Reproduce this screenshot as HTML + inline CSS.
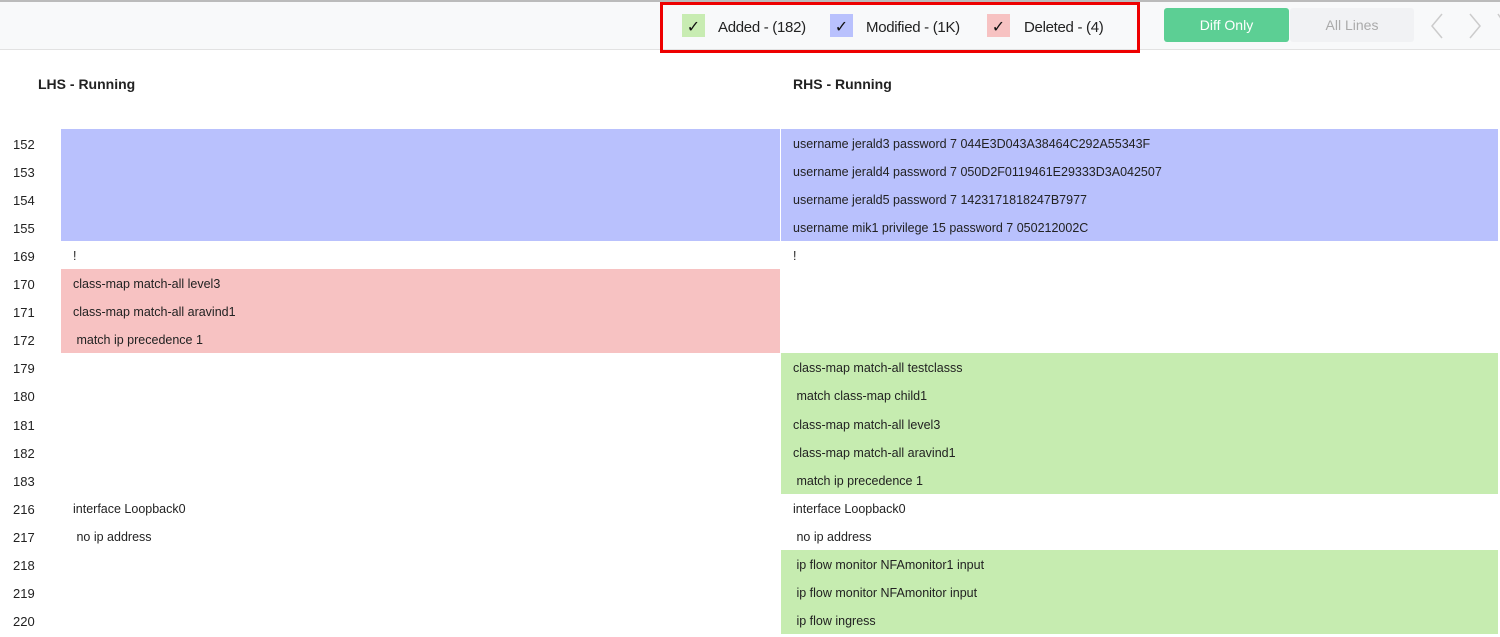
<!DOCTYPE html>
<html><head><style>
*{margin:0;padding:0;box-sizing:border-box}
body{width:1500px;height:637px;overflow:hidden;background:#fff;font-family:"Liberation Sans",sans-serif;position:relative;color:#222}
.top{position:absolute;left:0;top:0;width:1500px;height:50px;background:#f8f9fa;border-top:2px solid #bbb;border-bottom:1px solid #e2e2e2}
.red{position:absolute;left:660px;top:2px;width:480px;height:51px;border:3px solid #e00;}
.cb{position:absolute;top:14px;width:23px;height:23px;font-size:16px;text-align:center;line-height:27px;color:#111}
.lbl{position:absolute;top:19px;font-size:15px;color:#222;letter-spacing:-0.3px}
.btn{position:absolute;top:8px;height:34px;line-height:34px;text-align:center;font-size:14px;border-radius:3px}
.h{position:absolute;top:76px;font-size:14px;font-weight:bold;color:#222}
.row{position:absolute;height:28.1px;font-size:12.5px;line-height:31px;color:#222}
.n{position:absolute;left:13px;font-size:13px;line-height:31px;height:28px}
.b{background:#b9c1fd}.r{background:#f7c2c2}.g{background:#c6ecb0}
</style></head><body>
<div class="top"></div>
<div class="red"></div>
<div class="cb" style="left:682px;background:#c8ecb2">✓</div><div class="lbl" style="left:718px">Added - (182)</div>
<div class="cb" style="left:830px;background:#b9c1fd">✓</div><div class="lbl" style="left:866px">Modified - (1K)</div>
<div class="cb" style="left:987px;background:#f7c2c2">✓</div><div class="lbl" style="left:1024px">Deleted - (4)</div>
<div class="btn" style="left:1164px;width:125px;background:#5ccf94;color:#fff">Diff Only</div>
<div class="btn" style="left:1290px;width:124px;background:#f1f2f4;color:#aaa">All Lines</div>
<svg style="position:absolute;left:1428px;top:12px" width="80" height="28"><path d="M14 2 L4 14 L14 26" stroke="#ccc" fill="none" stroke-width="1.5"/><path d="M42 2 L52 14 L42 26" stroke="#ccc" fill="none" stroke-width="1.5"/><path d="M70 2 L78 14" stroke="#ccc" fill="none" stroke-width="1.5"/></svg>
<div class="h" style="left:38px">LHS - Running</div>
<div class="h" style="left:793px">RHS - Running</div>
<div id="rows"></div>
<script>
var d=[
["152","b","","b","username jerald3 password 7 044E3D043A38464C292A55343F"],
["153","b","","b","username jerald4 password 7 050D2F0119461E29333D3A042507"],
["154","b","","b","username jerald5 password 7 1423171818247B7977"],
["155","b","","b","username mik1 privilege 15 password 7 050212002C"],
["169","","!","","!"],
["170","r","class-map match-all level3","",""],
["171","r","class-map match-all aravind1","",""],
["172","r"," match ip precedence 1","",""],
["179","","","g","class-map match-all testclasss"],
["180","","","g"," match class-map child1"],
["181","","","g","class-map match-all level3"],
["182","","","g","class-map match-all aravind1"],
["183","","","g"," match ip precedence 1"],
["216","","interface Loopback0","","interface Loopback0"],
["217",""," no ip address",""," no ip address"],
["218","","","g"," ip flow monitor NFAmonitor1 input"],
["219","","","g"," ip flow monitor NFAmonitor input"],
["220","","","g"," ip flow ingress"]];
var h="";d.forEach(function(r,i){var y=129+i*28.05;
h+='<div class="n" style="top:'+y+'px">'+r[0]+'</div>';
h+='<div class="row '+r[1]+'" style="left:61px;width:719px;top:'+y+'px;padding-left:12px;white-space:pre">'+r[2]+'</div>';
h+='<div class="row '+r[3]+'" style="left:781px;width:717px;top:'+y+'px;padding-left:12px;white-space:pre">'+r[4]+'</div>';});
document.getElementById("rows").innerHTML=h;
</script>
</body></html>
